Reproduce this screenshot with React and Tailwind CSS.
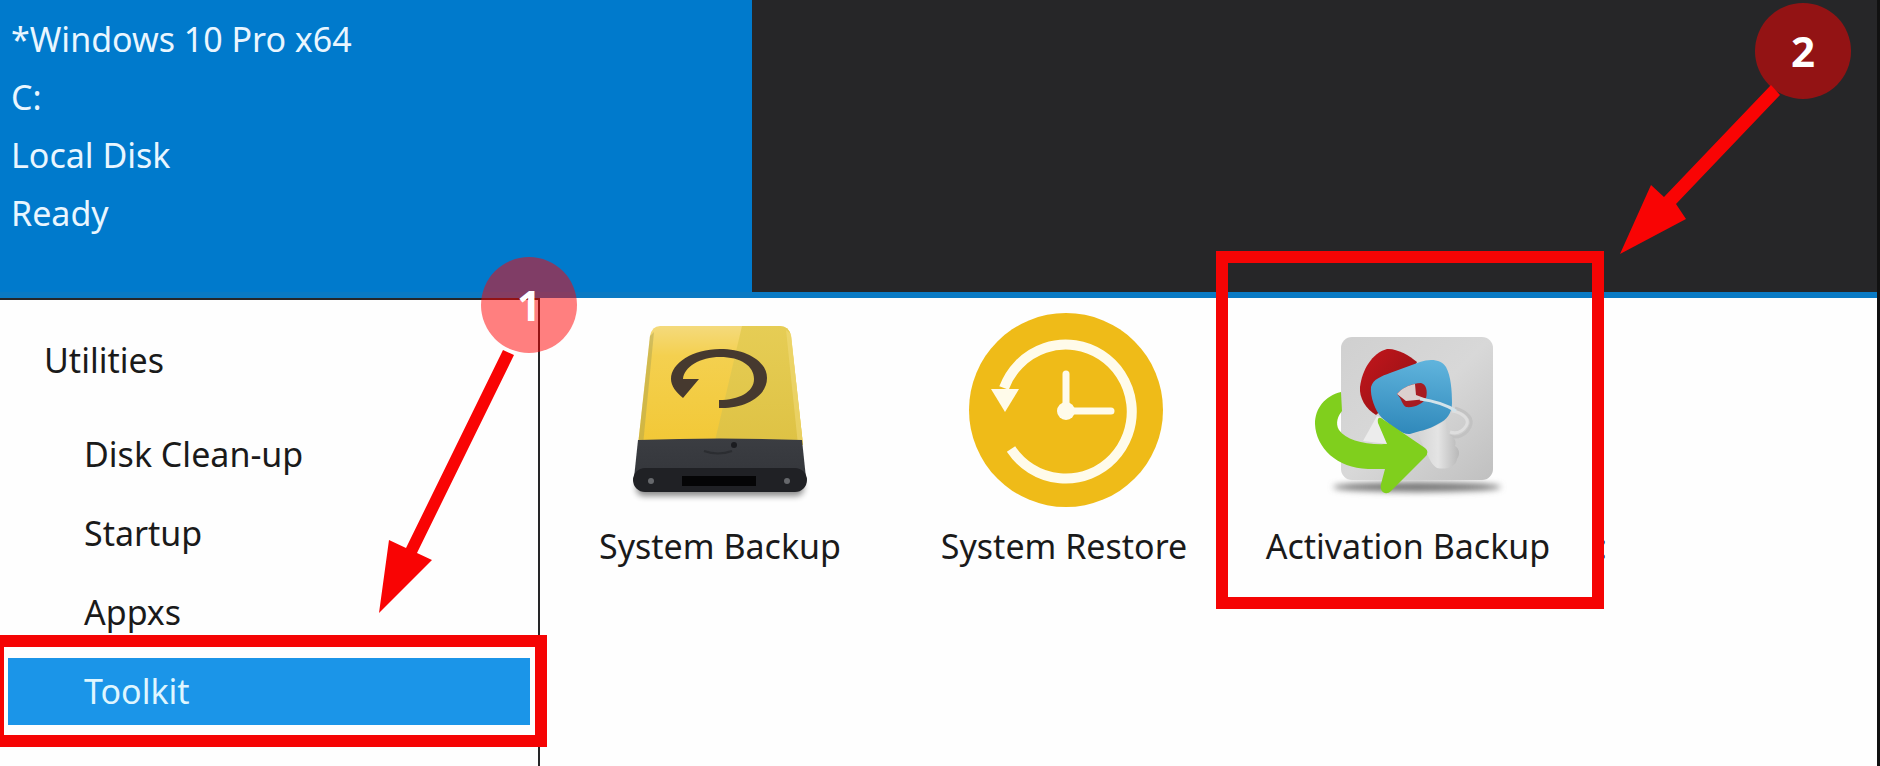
import React from "react";

const drive = {
  name: "*Windows 10 Pro x64",
  letter: "C:",
  label: "Local Disk",
  state: "Ready",
};

const utilities = ["Disk Clean-up", "Startup", "Appxs", "Toolkit"];

function BackupDriveIcon() {
  return (
    <svg viewBox="0 0 200 200" className="size-[200px]" aria-hidden="true">
      <defs>
        <linearGradient id="driveTop" x1="0" y1="0" x2="0" y2="1">
          <stop offset="0" stopColor="#f4da7c" />
          <stop offset="0.25" stopColor="#f4d04f" />
          <stop offset="1" stopColor="#f2c836" />
        </linearGradient>
        <linearGradient id="driveShade" x1="0" y1="0" x2="0" y2="1">
          <stop offset="0" stopColor="#e6cd55" />
          <stop offset="1" stopColor="#dec244" />
        </linearGradient>
        <linearGradient id="driveBase" x1="0" y1="0" x2="0" y2="1">
          <stop offset="0" stopColor="#3b3d42" />
          <stop offset="1" stopColor="#34363b" />
        </linearGradient>
        <filter id="driveBlur" x="-20%" y="-50%" width="140%" height="200%">
          <feGaussianBlur stdDeviation="3" />
        </filter>
      </defs>
      <rect x="16" y="170" width="168" height="16" rx="8" fill="#000" opacity="0.45" filter="url(#driveBlur)" />
      <path d="M40 16 H160 Q169 16 171 26 L183 135 H18 L30 26 Q32 16 40 16 Z" fill="url(#driveTop)" />
      <path d="M122 16 H160 Q169 16 171 26 L183 135 H94 Z" fill="url(#driveShade)" />
      <path d="M30 26 L18 135 H23 L34 22 Z" fill="#a8a050" opacity="0.45" />
      <path d="M171 24 L183 135 H178 L166 20 Z" fill="#f3dd7d" opacity="0.5" />
      <path d="M18 130 Q100 127 182 130 L186 168 H14 Z" fill="url(#driveBase)" />
      <rect x="13" y="158" width="174" height="24" rx="12" fill="#202125" />
      <rect x="62" y="166" width="74" height="10" fill="#050506" />
      <circle cx="31" cy="171" r="3" fill="#66686c" />
      <circle cx="167" cy="171" r="3" fill="#66686c" />
      <path d="M84 141 Q98 146 112 141" fill="none" stroke="#2b2d31" strokeWidth="2" />
      <circle cx="114" cy="135" r="3" fill="#1b1c20" />
      <path
        d="M99 98 C124 99 147 87 147 68 C147 51 126 39 100 39 C73 39 51 53 51 69 C51 76 56 82 63 88 L79 69 L63 69 C64 57 80 47 100 47 C121 47 134 56 134 69 C134 82 119 90 99 90 Z"
        fill="#46392f"
      />
    </svg>
  );
}

function RestoreClockIcon() {
  return (
    <svg viewBox="0 0 200 200" className="size-[200px]" aria-hidden="true">
      <circle cx="102" cy="100" r="97" fill="#efbb18" />
      <path d="M40 78 A66 67 0 1 1 47 139" fill="none" stroke="#fffbea" strokeWidth="10" />
      <path d="M27 79 H55 L41 102 Z" fill="#fffbea" />
      <path d="M102 64 V101 H147" fill="none" stroke="#fffbea" strokeWidth="7" strokeLinecap="round" />
      <circle cx="102" cy="101" r="9" fill="#fffbea" />
    </svg>
  );
}

function ActivationKeysIcon() {
  return (
    <svg viewBox="0 0 200 200" className="size-[200px]" aria-hidden="true">
      <defs>
        <linearGradient id="plate" x1="0" y1="0" x2="1" y2="1">
          <stop offset="0" stopColor="#d0d0d0" />
          <stop offset="0.5" stopColor="#d8d8d8" />
          <stop offset="1" stopColor="#c0c0c0" />
        </linearGradient>
        <linearGradient id="blueKey" x1="0.5" y1="0" x2="0.4" y2="1">
          <stop offset="0" stopColor="#5fb3dc" />
          <stop offset="1" stopColor="#2f88ba" />
        </linearGradient>
        <linearGradient id="redKey" x1="0" y1="0" x2="1" y2="1">
          <stop offset="0" stopColor="#c4161c" />
          <stop offset="1" stopColor="#8f1014" />
        </linearGradient>
        <linearGradient id="keyBlade" x1="0" y1="0" x2="1" y2="0">
          <stop offset="0" stopColor="#d4d4d4" />
          <stop offset="0.5" stopColor="#e4e4e4" />
          <stop offset="1" stopColor="#b8b8b8" />
        </linearGradient>
        <filter id="plateBlur" x="-20%" y="-100%" width="140%" height="300%">
          <feGaussianBlur stdDeviation="3" />
        </filter>
      </defs>
      <ellipse cx="109" cy="177" rx="84" ry="5" fill="#777" filter="url(#plateBlur)" />
      <rect x="33" y="27" width="152" height="143" rx="11" fill="url(#plate)" />
      <path d="M69 106 L55 131 L80 134 L84 112 Z" fill="#ececec" />
      <path d="M147 98 C160 102 166 109 162 117 C158 125 150 129 141 126" fill="none" stroke="#c2c2c2" strokeWidth="3" />
      <path d="M144 101 C156 103 162 110 158 116 C154 122 148 124 142 122" fill="none" stroke="#dedede" strokeWidth="3" />
      <path d="M109 122 C120 120 130 115 138 110 L139 124 C146 126 149 131 147 136 C152 139 152 145 149 149 C148 157 138 160 129 158 C124 155 122 150 118 142 Z" fill="url(#keyBlade)" />
      <path d="M79 39 C88 38 101 45 109 52 L92 84 L68 105 C58 99 51 88 52 77 C54 60 64 43 79 39 Z" fill="url(#redKey)" />
      <path
        d="M82 63 L112 52 C123 48 134 50 138 57 C143 66 144 81 144 93 C144 103 139 110 130 114 C120 120 111 121 102 124 C95 125 83 116 74 108 C67 101 62 86 63 77 C65 69 74 66 82 63 Z"
        fill="url(#blueKey)"
      />
      <path d="M89 84 C94 78 104 73 113 73 C118 74 120 81 118 88 C115 94 106 98 98 97 C94 95 94 89 89 84 Z" fill="#a71c22" />
      <path d="M89 84 C94 78 101 75 107 74 L108 85 L119 89 L98 91 Z" fill="#dcd0cf" />
      <path d="M112 89 Q134 92 148 101" fill="none" stroke="#d3e3ea" strokeWidth="3" />
      <path
        d="M33 82 C17 86 7 98 7 114 C8 138 29 158 60 159 L77 159 L73 174 C71 182 78 186 83 181 L117 147 Q122 142 117 138 L76 110 C71 106 69 108 70 113 L79 134 C56 135 38 130 31 120 C27 113 30 106 34 101 Z"
        fill="#80cf1d"
      />
    </svg>
  );
}

const tools = [
  { name: "System Backup", Icon: BackupDriveIcon },
  { name: "System Restore", Icon: RestoreClockIcon },
  { name: "Activation Backup", Icon: ActivationKeysIcon },
];

function StepBadge({ n, className }) {
  return (
    <span
      className={`absolute z-20 flex size-24 items-center justify-center rounded-full bg-[#ff0000]/50 text-[42px] leading-none font-bold text-white ${className}`}
    >
      {n}
    </span>
  );
}

export default function App() {
  return (
    <div className="relative flex min-h-screen flex-col overflow-hidden bg-[#fefefe] font-['Noto_Sans','Open_Sans',sans-serif] text-[34px] text-[#1a1a1a]">
      <div className="flex min-h-screen grow flex-col border-r-3 border-[#111111]">
        <header className="flex border-b-6 border-[#0a7ac4] bg-[#262628]">
          <section className="w-[752px] bg-[#007acc] px-[11px] pt-[10px] pb-[50px] text-[#e9f6ff]">
            <p className="leading-[58px]">{drive.name}</p>
            <p className="leading-[58px]">{drive.letter}</p>
            <p className="leading-[58px]">{drive.label}</p>
            <p className="leading-[58px]">{drive.state}</p>
          </section>
        </header>

        <div className="flex grow">
          <nav aria-label="Utilities" className="w-[540px] shrink-0 border-t-2 border-r-2 border-[#262628]">
            <h2 className="px-11 pt-[30px] leading-[60px]">Utilities</h2>
            <ul className="flex flex-col gap-3 px-2 pt-[31px]">
              {utilities.map((name) => {
                const selected = name === "Toolkit";
                return (
                  <li key={name}>
                    <button
                      type="button"
                      aria-current={selected ? "page" : undefined}
                      className={`block h-[67px] w-full px-[76px] text-left ${selected ? "bg-[#1b95e8] text-[#dff6ff]" : ""}`}
                    >
                      {name}
                    </button>
                  </li>
                );
              })}
            </ul>
          </nav>

          <main className="flex pt-3 pl-2">
            {tools.map(({ name, Icon }) => (
              <button key={name} type="button" className="flex w-[344px] flex-col items-center self-start">
                <Icon />
                <span className="mt-3 leading-[48px] whitespace-nowrap">{name}</span>
              </button>
            ))}
            <span className="mt-[212px] ml-[18px] leading-[48px]">:</span>
          </main>
        </div>
      </div>

      <div className="pointer-events-none absolute top-[251px] left-[1216px] z-10 h-[358px] w-[388px] border-12 border-[#f50404]" />
      <div className="pointer-events-none absolute top-[635px] left-[-8px] z-10 h-[112px] w-[555px] border-12 border-[#f50404]" />
      <StepBadge n="1" className="top-[257px] left-[481px]" />
      <StepBadge n="2" className="top-[3px] left-[1755px]" />
      <svg className="pointer-events-none absolute top-0 left-0 z-10 h-[766px] w-[1880px]" viewBox="0 0 1880 766" aria-hidden="true">
        <path d="M503 350 L514 355 L417 553 L432 560 L379 613 L389 540 L406 548 Z" fill="#f90404" />
        <path d="M1771 85 L1780 95 L1676 204 L1686 219 L1620 254 L1651 185 L1664 197 Z" fill="#f90404" />
      </svg>
    </div>
  );
}
